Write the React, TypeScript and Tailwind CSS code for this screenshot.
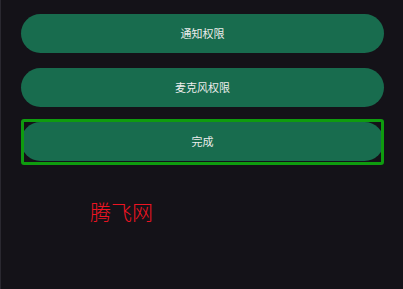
import React from "react";

const font = { fontFamily: '"Noto Sans CJK SC", "Noto Sans", sans-serif' };

function PillButton({ label }: { label: string }) {
  return (
    <div className="flex h-[39px] w-full items-center justify-center rounded-full bg-[#186c4e] text-[11px] text-[#ececec]">
      {label}
    </div>
  );
}

export default function App() {
  return (
    <div
      className="flex h-[289px] w-[403px] flex-col border-l border-[#2a2830] bg-[#141218] pl-[20px] pr-[19px] pt-[14px]"
      style={font}
    >
      <div className="flex flex-col gap-[15px]">
        <PillButton label="通知权限" />
        <PillButton label="麦克风权限" />
        <div className="relative">
          <PillButton label="完成" />
          <div className="pointer-events-none absolute -bottom-[4px] -top-[3px] left-0 right-0 rounded-[3px] border-[3px] border-[#0f9c0f]" />
        </div>
      </div>
      <div className="ml-[69px] mt-[40px] text-[21px] font-light leading-none text-[#ee1422]">
        腾飞网
      </div>
    </div>
  );
}
